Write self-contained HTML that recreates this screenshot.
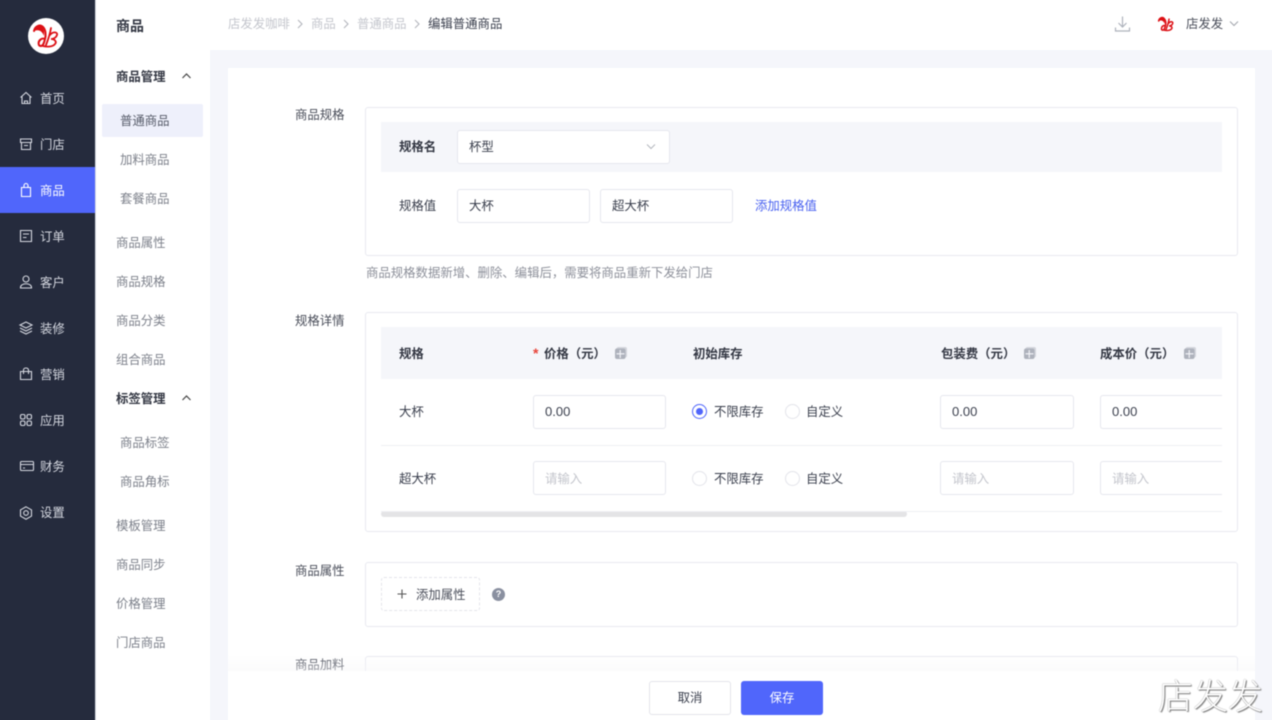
<!DOCTYPE html>
<html><head><meta charset="utf-8">
<style>
*{box-sizing:border-box}
html,body{margin:0;padding:0}
html{overflow:hidden;background:#f5f6fb}
body{width:1272px;height:720px;overflow:hidden;position:relative;background:#f5f6fb;font-family:"Liberation Sans","Noto Sans CJK SC",sans-serif;font-size:12.4px;color:#3a3f4d}
#w{position:absolute;left:0;top:0;width:1272px;height:720px;filter:blur(.4px)}
.a{position:absolute}
.t{position:absolute;white-space:nowrap;line-height:18px;transform:translateY(calc(-50% + 1px))}
.side{left:-8px;top:-8px;width:103px;height:736px;background:#252b3d}
.nav{color:#d5d8e0}
.ico{position:absolute;left:18px;width:16px;height:16px;fill:none;stroke:#d5d8e0;stroke-width:1.1}
.sub{left:95px;top:-8px;width:115px;height:736px;background:#fff;box-shadow:inset 1px 0 0 #d8dbe3}
.m{color:#7d818b}
.b{font-weight:700;color:#333743}
.box{position:absolute;background:#fff;border:1px solid #e8e9f0;border-radius:3px}
.inp{position:absolute;background:#fff;border:1px solid #e6e7ee;border-radius:3px;height:34px}
.rad{position:absolute;width:15px;height:15px;border:1px solid #e3e4ea;border-radius:50%;background:#fff}
.lab{color:#4a4e5a}
.ph{color:#c3c5cc}
.cp{position:absolute;width:14px;height:14px}
</style></head><body><div id="w">

<div class="a side"></div>
<svg class="a" style="left:28px;top:18px" width="36" height="36" viewBox="0 0 36 36"><circle cx="18" cy="18" r="18" fill="#fff"/><path d="M6 13C7 8 12 6 15 9C18 12 18 18 17 21C16 25 15 28 13 28C10 28 10 24 12 22C13 21 15 20 17 21" fill="none" stroke="#dc0f14" stroke-width="2" stroke-linecap="round"/><path d="M6 13C8 9 12 7 14 9C17 12 16 15 16 18C14 13 11 11 6 13Z" fill="#dc0f14"/><path d="M23 10C22 16 20 22 18 27M22 17C25 13 30 14 29 17C28 20 25 21 23 21C27 21 29 24 27 26C25 29 19 29 15 28" fill="none" stroke="#dc0f14" stroke-width="1.800" stroke-linecap="round"/></svg>

<div class="a" style="left:-8px;top:167px;width:103px;height:46px;background:#5066fb"></div>

<svg class="ico" style="top:90px" viewBox="0 0 16 16"><path d="M2.500 7.500 8 2.500l5.500 5M4 6.500V13.500h8V6.500M6.500 13.500v-2.500h3v2.500"/></svg>
<span class="t nav" style="left:40px;top:98px">首页</span>
<svg class="ico" style="top:136px" viewBox="0 0 16 16"><path d="M2.500 3h11v3.500h-11zM3.500 6.500v7h9v-7M6 9.500h4"/></svg>
<span class="t nav" style="left:40px;top:144px">门店</span>
<svg class="ico" style="top:182px;stroke:#fff" viewBox="0 0 16 16"><path d="M3.500 5.500h9v9h-9zM6 5.500V3.500a2 2 0 0 1 4 0v2"/></svg>
<span class="t" style="left:40px;top:190px;color:#fff">商品</span>
<svg class="ico" style="top:228px" viewBox="0 0 16 16"><path d="M2.500 2.500h11v11h-11zM5 6h6M5 9.500h3.500"/></svg>
<span class="t nav" style="left:40px;top:236px">订单</span>
<svg class="ico" style="top:274px" viewBox="0 0 16 16"><circle cx="8" cy="5" r="3"/><path d="M2.500 13.500c0-5 11-5 11 0v.5h-11z"/></svg>
<span class="t nav" style="left:40px;top:282px">客户</span>
<svg class="ico" style="top:320px" viewBox="0 0 16 16"><path d="M8 2l6 3-6 3-6-3zM2 8l6 3 6-3M2 11l6 3 6-3"/></svg>
<span class="t nav" style="left:40px;top:328px">装修</span>
<svg class="ico" style="top:366px" viewBox="0 0 16 16"><path d="M2.500 5.500h11v8h-11zM5.500 8V4a2.500 2 0 0 1 5 0v4"/></svg>
<span class="t nav" style="left:40px;top:374px">营销</span>
<svg class="ico" style="top:412px" viewBox="0 0 16 16"><rect x="2.500" y="2.500" width="4.500" height="4.500" rx="1.500"/><rect x="9" y="2.500" width="4.500" height="4.500" rx="1.500"/><rect x="2.500" y="9" width="4.500" height="4.500" rx="1.500"/><rect x="9" y="9" width="4.500" height="4.500" rx="1.500"/></svg>
<span class="t nav" style="left:40px;top:420px">应用</span>
<svg class="ico" style="top:458px;left:19px" viewBox="0 0 16 16"><rect x="1.500" y="3.500" width="13" height="9" rx="1"/><path d="M1.500 6.500h13M4 10h2"/></svg>
<span class="t nav" style="left:40px;top:466px">财务</span>
<svg class="ico" style="top:505px" viewBox="0 0 16 16"><path d="M8 1.800l5.500 3.100v6.200L8 14.200l-5.500-3.100V4.900z"/><circle cx="8" cy="8" r="2.300"/></svg>
<span class="t nav" style="left:40px;top:512px">设置</span>

<div class="a sub"></div>
<span class="t b" style="left:116px;top:25px;font-size:14px">商品</span>
<span class="t b" style="left:116px;top:76px">商品管理</span>
<svg class="a" style="left:181px;top:72px" width="11" height="8" viewBox="0 0 11 8"><path d="M1.500 6 5.500 2l4 4" fill="none" stroke="#444" stroke-width="1.200"/></svg>
<div class="a" style="left:102px;top:104px;width:101px;height:33px;background:#eef0fb;border-radius:2px"></div>
<span class="t" style="left:120px;top:120px;color:#555a68">普通商品</span>
<span class="t m" style="left:120px;top:159px">加料商品</span>
<span class="t m" style="left:120px;top:198px">套餐商品</span>
<span class="t m" style="left:116px;top:242px">商品属性</span>
<span class="t m" style="left:116px;top:281px">商品规格</span>
<span class="t m" style="left:116px;top:320px">商品分类</span>
<span class="t m" style="left:116px;top:359px">组合商品</span>
<span class="t b" style="left:116px;top:398px">标签管理</span>
<svg class="a" style="left:181px;top:394px" width="11" height="8" viewBox="0 0 11 8"><path d="M1.500 6 5.500 2l4 4" fill="none" stroke="#444" stroke-width="1.200"/></svg>
<span class="t m" style="left:120px;top:442px">商品标签</span>
<span class="t m" style="left:120px;top:481px">商品角标</span>
<span class="t m" style="left:116px;top:525px">模板管理</span>
<span class="t m" style="left:116px;top:564px">商品同步</span>
<span class="t m" style="left:116px;top:603px">价格管理</span>
<span class="t m" style="left:116px;top:642px">门店商品</span>

<div class="a" style="left:210px;top:-8px;width:1070px;height:58px;background:#fff"></div>
<span class="t" style="left:228px;top:23px;color:#c4c6cd">店发发咖啡</span>
<svg class="a" style="left:297px;top:19px" width="6" height="10" viewBox="0 0 6 10"><path d="M1 1l4 4-4 4" fill="none" stroke="#b4b7be" stroke-width="1.100"/></svg>
<span class="t" style="left:311px;top:23px;color:#c4c6cd">商品</span>
<svg class="a" style="left:343px;top:19px" width="6" height="10" viewBox="0 0 6 10"><path d="M1 1l4 4-4 4" fill="none" stroke="#b4b7be" stroke-width="1.100"/></svg>
<span class="t" style="left:357px;top:23px;color:#c4c6cd">普通商品</span>
<svg class="a" style="left:414px;top:19px" width="6" height="10" viewBox="0 0 6 10"><path d="M1 1l4 4-4 4" fill="none" stroke="#b4b7be" stroke-width="1.100"/></svg>
<span class="t" style="left:428px;top:23px;color:#3a3f4d">编辑普通商品</span>
<svg class="a" style="left:1114px;top:15px" width="17" height="18" viewBox="0 0 17 18"><path d="M8.500 1.500v10M4.500 8l4 4 4-4M1.500 12.500v3.500h14v-3.500" fill="none" stroke="#aeb2bc" stroke-width="1.200"/></svg>
<svg class="a" style="left:1155px;top:13px" width="22" height="22" viewBox="0 0 36 36"><path d="M6 13C7 8 12 6 15 9C18 12 18 18 17 21C16 25 15 28 13 28C10 28 10 24 12 22C13 21 15 20 17 21" fill="none" stroke="#dc0f14" stroke-width="2.600" stroke-linecap="round"/><path d="M6 13C8 9 12 7 14 9C17 12 16 15 16 18C14 13 11 11 6 13Z" fill="#dc0f14"/><path d="M23 10C22 16 20 22 18 27M22 17C25 13 30 14 29 17C28 20 25 21 23 21C27 21 29 24 27 26C25 29 19 29 15 28" fill="none" stroke="#dc0f14" stroke-width="2.400" stroke-linecap="round"/></svg>
<span class="t" style="left:1186px;top:23px;color:#4a4e5a">店发发</span>
<svg class="a" style="left:1229px;top:20px" width="10" height="7" viewBox="0 0 10 7"><path d="M1 1.500l4 4 4-4" fill="none" stroke="#a4a7af" stroke-width="1.100"/></svg>

<div class="a" style="left:228px;top:68px;width:1027px;height:660px;background:#fff"></div>

<span class="t lab" style="left:295px;top:114px">商品规格</span>
<div class="box" style="left:365px;top:107px;width:873px;height:149px"></div>
<div class="a" style="left:381px;top:122px;width:841px;height:50px;background:#f5f6fa"></div>
<span class="t b" style="left:399px;top:146px;font-weight:600">规格名</span>
<div class="inp" style="left:457px;top:130px;width:213px"></div>
<span class="t" style="left:469px;top:146px">杯型</span>
<svg class="a" style="left:646px;top:143px" width="10" height="7" viewBox="0 0 10 7"><path d="M1 1.500l4 4 4-4" fill="none" stroke="#b4b7be" stroke-width="1"/></svg>
<span class="t" style="left:399px;top:205px">规格值</span>
<div class="inp" style="left:457px;top:189px;width:133px"></div>
<span class="t" style="left:469px;top:205px">大杯</span>
<div class="inp" style="left:600px;top:189px;width:133px"></div>
<span class="t" style="left:612px;top:205px">超大杯</span>
<span class="t" style="left:755px;top:205px;color:#4a62f0">添加规格值</span>
<span class="t" style="left:366px;top:272px;color:#8d909a">商品规格数据新增、删除、编辑后，需要将商品重新下发给门店</span>

<span class="t lab" style="left:295px;top:320px">规格详情</span>
<div class="box" style="left:365px;top:312px;width:873px;height:220px"></div>
<div class="a" style="left:381px;top:327px;width:841px;height:52px;background:#f5f6fa"></div>
<span class="t b" style="left:399px;top:353px;font-weight:600">规格</span>
<span class="t" style="left:533px;top:352px;color:#e8443a;font-size:14px;font-weight:700">*</span>
<span class="t b" style="left:544px;top:353px;font-weight:600">价格（元）</span>
<span class="t b" style="left:693px;top:353px;font-weight:600">初始库存</span>
<span class="t b" style="left:941px;top:353px;font-weight:600">包装费（元）</span>
<span class="t b" style="left:1100px;top:353px;font-weight:600">成本价（元）</span>
<svg class="cp" style="left:614px;top:346px" viewBox="0 0 14 14"><rect x="2.500" y="1" width="10.500" height="10.500" rx="2" fill="#d2d4db"/><rect x="1" y="2.500" width="10.500" height="10.500" rx="2" fill="#aeb2bc"/><path d="M6.200 4v8M2.500 7.800h8" stroke="#f5f6fa" stroke-width="1.100"/></svg>
<svg class="cp" style="left:1023px;top:346px" viewBox="0 0 14 14"><rect x="2.500" y="1" width="10.500" height="10.500" rx="2" fill="#d2d4db"/><rect x="1" y="2.500" width="10.500" height="10.500" rx="2" fill="#aeb2bc"/><path d="M6.200 4v8M2.500 7.800h8" stroke="#f5f6fa" stroke-width="1.100"/></svg>
<svg class="cp" style="left:1183px;top:346px" viewBox="0 0 14 14"><rect x="2.500" y="1" width="10.500" height="10.500" rx="2" fill="#d2d4db"/><rect x="1" y="2.500" width="10.500" height="10.500" rx="2" fill="#aeb2bc"/><path d="M6.200 4v8M2.500 7.800h8" stroke="#f5f6fa" stroke-width="1.100"/></svg>

<span class="t" style="left:399px;top:411px">大杯</span>
<div class="inp" style="left:533px;top:395px;width:133px"></div>
<span class="t" style="left:545px;top:411px;font-size:13px">0.00</span>
<div class="rad" style="left:692px;top:404px;border-color:#5066fb"></div>
<div class="a" style="left:696px;top:408px;width:7px;height:7px;border-radius:50%;background:#5066fb"></div>
<span class="t" style="left:714px;top:411px">不限库存</span>
<div class="rad" style="left:785px;top:404px"></div>
<span class="t" style="left:806px;top:411px">自定义</span>
<div class="inp" style="left:940px;top:395px;width:134px"></div>
<span class="t" style="left:952px;top:411px;font-size:13px">0.00</span>
<div class="inp" style="left:1100px;top:395px;width:122px;border-right:0;border-radius:3px 0 0 3px"></div>
<span class="t" style="left:1112px;top:411px;font-size:13px">0.00</span>
<div class="a" style="left:381px;top:445px;width:841px;height:1px;background:#eeeff3"></div>

<span class="t" style="left:399px;top:478px">超大杯</span>
<div class="inp" style="left:533px;top:461px;width:133px"></div>
<span class="t ph" style="left:545px;top:478px">请输入</span>
<div class="rad" style="left:692px;top:471px"></div>
<span class="t" style="left:714px;top:478px">不限库存</span>
<div class="rad" style="left:785px;top:471px"></div>
<span class="t" style="left:806px;top:478px">自定义</span>
<div class="inp" style="left:940px;top:461px;width:134px"></div>
<span class="t ph" style="left:952px;top:478px">请输入</span>
<div class="inp" style="left:1100px;top:461px;width:122px;border-right:0;border-radius:3px 0 0 3px"></div>
<span class="t ph" style="left:1112px;top:478px">请输入</span>
<div class="a" style="left:381px;top:511px;width:526px;height:6px;border-radius:3px;background:#e4e4e6"></div>
<div class="a" style="left:381px;top:511px;width:841px;height:1px;background:#eeeff3"></div>

<span class="t lab" style="left:295px;top:570px">商品属性</span>
<div class="box" style="left:365px;top:562px;width:873px;height:65px"></div>
<div class="a" style="left:381px;top:577px;width:99px;height:34px;border:1px dashed #e3e4ea;border-radius:3px"></div>
<svg class="a" style="left:397px;top:589px" width="10" height="10" viewBox="0 0 10 10"><path d="M5 .5v9M.5 5h9" stroke="#555" stroke-width="1.100"/></svg>
<span class="t" style="left:416px;top:594px;color:#4a4e5a">添加属性</span>
<div class="a" style="left:492px;top:588px;width:13px;height:13px;border-radius:50%;background:#8a90a0;color:#fff;font-size:9px;line-height:13px;text-align:center;font-weight:700">?</div>

<span class="t lab" style="left:295px;top:664px">商品加料</span>
<div class="box" style="left:365px;top:656px;width:873px;height:40px"></div>

<div class="a" style="left:228px;top:655px;width:1027px;height:16px;background:linear-gradient(rgba(250,250,252,0),rgba(247,247,249,.5))"></div>
<div class="a" style="left:228px;top:671px;width:1027px;height:57px;background:#fff"></div>
<div class="a" style="left:649px;top:681px;width:82px;height:34px;background:#fff;border:1px solid #e3e4ea;border-radius:3px;text-align:center;line-height:32px">取消</div>
<div class="a" style="left:741px;top:681px;width:82px;height:34px;background:#5066fb;border-radius:3px;text-align:center;line-height:34px;color:#fff">保存</div>

<span class="t" style="left:1158px;top:694px;font-size:35px;line-height:40px;color:#fff;font-family:'Noto Sans CJK SC',sans-serif;font-weight:300;text-shadow:0 0 1px #666,1px 1px 1px #777">店发发</span>
</div></body></html>
